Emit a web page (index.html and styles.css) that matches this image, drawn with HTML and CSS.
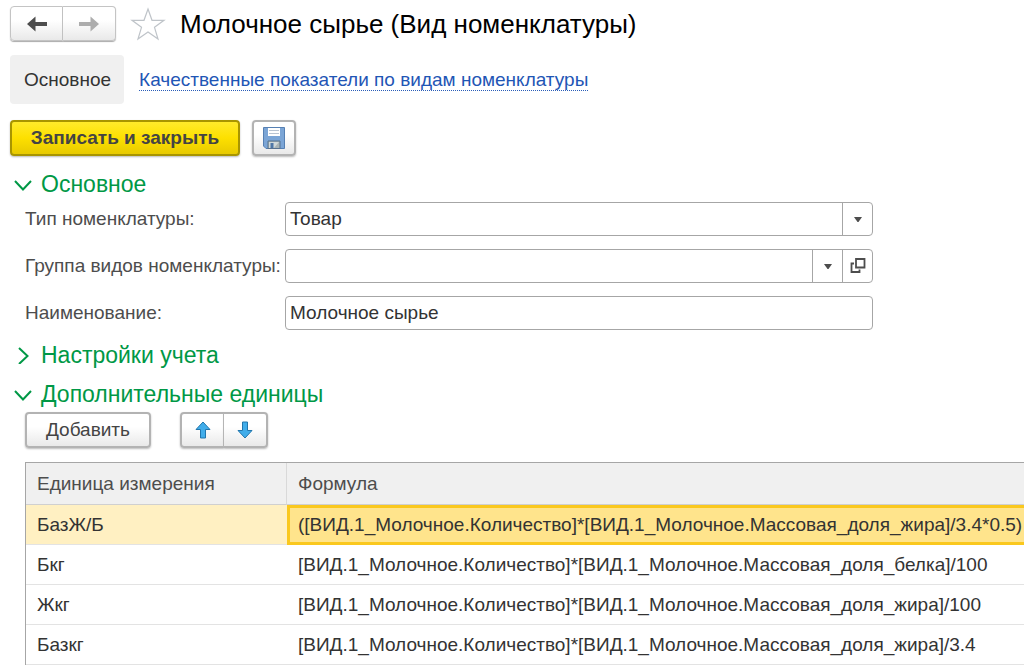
FILE: index.html
```html
<!DOCTYPE html>
<html lang="ru">
<head>
<meta charset="utf-8">
<meta name="viewport" content="width=device-width, initial-scale=1">
<title>Молочное сырье (Вид номенклатуры)</title>
<link rel="stylesheet" href="styles.css">
</head>
<body>
<header class="header">
  <div class="button-group">
    <button class="btn nav-btn" type="button" aria-label="Назад">
      <svg width="22" height="16" viewBox="0 0 22 16"><path d="M1 8 L9.500 0.500 V6 H21 V10 H9.500 V15.500 Z" fill="#4d4d4d"/></svg>
    </button>
    <button class="btn nav-btn" type="button" aria-label="Вперед">
      <svg width="22" height="16" viewBox="0 0 22 16"><path d="M21 8 L12.500 0.500 V6 H1 V10 H12.500 V15.500 Z" fill="#adadad"/></svg>
    </button>
  </div>
  <button class="star" type="button" aria-label="Добавить в избранное">
    <svg width="36" height="34" viewBox="0 0 36 34"><path d="M18 2 L22 13.300 H34 L24.500 20.300 L28 32 L18 25 L8 32 L11.500 20.300 L2 13.300 H14 Z" fill="#fff" stroke="#bfc4c9" stroke-width="1.200"/></svg>
  </button>
  <h1 class="title">Молочное сырье (Вид номенклатуры)</h1>
</header>

<nav class="tabs">
  <span class="tab-current" aria-current="page">Основное</span>
  <a class="tab-link" href="#quality">Качественные показатели по видам номенклатуры</a>
</nav>

<main class="content">
  <div class="commands">
    <button class="btn btn-primary" type="button">Записать и закрыть</button>
    <button class="btn btn-save" type="button" aria-label="Записать">
      <svg width="22" height="22" viewBox="0 0 22 22">
        <path d="M0.500 0.500 H21.500 V21.500 H3 L0.500 19 Z" fill="#7ba5d6" stroke="#5680b3"/>
        <path d="M5 1 H17 V9 H5 Z" fill="#fff"/>
        <path d="M6 3.500 H16 M6 6.500 H16" stroke="#b9c4d2"/>
        <path d="M5 14 H17 V21.500 H5 Z" fill="#a9b4b5" stroke="#57728f"/>
        <path d="M6 15 H16 L11 21 H6 Z" fill="#d0d8d8"/>
        <path d="M7.500 16 H10.500 V21 H7.500 Z" fill="#4e77a6"/>
      </svg>
    </button>
  </div>

  <section>
    <h2 class="section-title">
      <button class="section-toggle" type="button" aria-expanded="true">
        <svg class="chevron" width="18" height="18" viewBox="0 0 18 18"><path d="M1 6 L9 14.500 L17 6"/></svg>
        Основное
      </button>
    </h2>
    <div class="form">
      <label class="label" for="type">Тип номенклатуры:</label>
      <div class="field">
        <div class="picker">
          <select class="control" id="type"><option>Товар</option></select>
          <span class="arrow"><svg width="8" height="5" viewBox="0 0 8 5"><path d="M0 0 H8 L4.500 5 H3.500 Z" fill="#4d4d4d"/></svg></span>
        </div>
      </div>
      <label class="label" for="group">Группа видов номенклатуры:</label>
      <div class="field">
        <div class="picker">
          <select class="control" id="group"><option></option></select>
          <span class="arrow"><svg width="8" height="5" viewBox="0 0 8 5"><path d="M0 0 H8 L4.500 5 H3.500 Z" fill="#4d4d4d"/></svg></span>
        </div>
        <button class="open-btn" type="button" aria-label="Открыть">
          <svg width="16" height="16" viewBox="0 0 16 16" fill="none" stroke="#4d4d4d" stroke-width="1.800"><path d="M6 1 H14.500 V9.500 H6 Z M4 5.500 H1.500 V14 H9.500 V11.500"/></svg>
        </button>
      </div>
      <label class="label" for="name">Наименование:</label>
      <div class="field"><input class="control" id="name" type="text" value="Молочное сырье"></div>
    </div>
  </section>

  <section>
    <h2 class="section-title section-collapsed">
      <button class="section-toggle" type="button" aria-expanded="false">
        <svg class="chevron" width="18" height="18" viewBox="0 0 18 18"><path d="M5 2 L13.500 10 L5 18"/></svg>
        Настройки учета
      </button>
    </h2>
  </section>

  <section>
    <h2 class="section-title">
      <button class="section-toggle" type="button" aria-expanded="true">
        <svg class="chevron" width="18" height="18" viewBox="0 0 18 18"><path d="M1 6 L9 14.500 L17 6"/></svg>
        Дополнительные единицы
      </button>
    </h2>
    <div class="toolbar">
      <button class="btn btn-add" type="button">Добавить</button>
      <div class="button-group">
        <button class="btn move-btn" type="button" aria-label="Переместить вверх">
          <svg width="16" height="18" viewBox="0 0 16 18"><path d="M8 1 L15 8.500 H10.500 V17 H5.500 V8.500 H1 Z" fill="#41adea" stroke="#2176ad" stroke-linejoin="round"/></svg>
        </button>
        <button class="btn move-btn" type="button" aria-label="Переместить вниз">
          <svg width="16" height="18" viewBox="0 0 16 18"><path d="M8 17 L15 9.500 H10.500 V1 H5.500 V9.500 H1 Z" fill="#41adea" stroke="#2176ad" stroke-linejoin="round"/></svg>
        </button>
      </div>
    </div>
    <table class="units">
      <thead>
        <tr><th class="unit-col" scope="col">Единица измерения</th><th scope="col">Формула</th></tr>
      </thead>
      <tbody>
        <tr class="selected"><td>БазЖ/Б</td><td class="active-cell">([ВИД.1_Молочное.Количество]*[ВИД.1_Молочное.Массовая_доля_жира]/3.4*0.5)</td></tr>
        <tr><td>Бкг</td><td>[ВИД.1_Молочное.Количество]*[ВИД.1_Молочное.Массовая_доля_белка]/100</td></tr>
        <tr><td>Жкг</td><td>[ВИД.1_Молочное.Количество]*[ВИД.1_Молочное.Массовая_доля_жира]/100</td></tr>
        <tr><td>Базкг</td><td>[ВИД.1_Молочное.Количество]*[ВИД.1_Молочное.Массовая_доля_жира]/3.4</td></tr>
      </tbody>
    </table>
  </section>
</main>
</body>
</html>
```
FILE: styles.css
```css
* { box-sizing: border-box; }

body {
  margin: 0;
  padding: 6px 0 0 10px;
  background: #fff;
  color: #333;
  font-family: "Liberation Sans", Arial, sans-serif;
  font-size: 19px;
  line-height: 24px;
  overflow-x: hidden;
}

button, input, select { font: inherit; color: inherit; }
svg { display: block; flex: none; }

.header { display: flex; align-items: center; }

.title {
  margin: 0;
  color: #000;
  font-size: 26px;
  font-weight: 400;
  line-height: 32px;
}

.btn {
  display: flex;
  align-items: center;
  justify-content: center;
  height: 36px;
  padding: 0;
  border: 2px solid #b3b3b3;
  border-radius: 4px;
  background: linear-gradient(#fff 40%, #e9e9e9);
  box-shadow: 0 1px 2px #bbb;
  color: #444;
}

.button-group { display: flex; }
.button-group .btn:first-child { border-right-width: 1px; border-radius: 4px 0 0 4px; }
.button-group .btn:last-child { border-left-width: 0; border-radius: 0 4px 4px 0; }
.button-group .nav-btn {
  width: 53px;
  height: 35px;
  border-width: 1px;
  border-color: #c4c4c4;
  box-shadow: 0 1px 1px #aaa;
}
.button-group .nav-btn:last-child { border-left-width: 0; }

.star {
  margin: 0 14px;
  padding: 0;
  border: 0;
  background: none;
}

.tabs { display: flex; align-items: center; gap: 15px; margin-top: 14px; }
.tab-current {
  padding: 13px 13px 12px 14px;
  border-radius: 4px;
  background: #f0f0f0;
}
.tab-link {
  border-bottom: 1px dotted #2a5db8;
  color: #1f56b5;
  line-height: 20px;
  margin-top: 2px;
  text-decoration: none;
}

.commands { display: flex; gap: 12px; margin: 16px 0 12px; }
.btn-primary {
  width: 230px;
  border-color: #a89500;
  background: linear-gradient(#ffea2b, #fde000 50%, #e8ca00);
  font-weight: 700;
}
.btn-save { width: 44px; }

.section-title { margin: 0; font-size: 23px; font-weight: 400; line-height: 32px; }
.section-toggle {
  display: flex;
  align-items: center;
  gap: 9px;
  padding: 0 0 0 4px;
  border: 0;
  background: none;
  color: #009846;
}
.chevron { fill: none; stroke: #009846; stroke-width: 2; }
.section-collapsed { margin: 9px 0 7px; }

.form {
  display: grid;
  grid-template-columns: 260px minmax(0, 588px);
  row-gap: 13px;
  align-items: center;
  margin: 2px 0 0 15px;
  padding-right: 15px;
}
.label { color: #4d4d4d; white-space: nowrap; }

.field {
  display: flex;
  height: 34px;
  border: 1px solid #a6a6a6;
  border-radius: 4px;
  overflow: hidden;
}
.control {
  width: 100%;
  height: 32px;
  padding: 0 5px 0 4px;
  border: 0;
  background: none;
  appearance: none;
}
.picker { display: grid; flex: 1; grid-template-columns: minmax(0, 1fr) 30px; }
.picker .control { grid-area: 1 / 1 / 2 / 3; }
.arrow {
  grid-area: 1 / 2;
  display: grid;
  place-items: center;
  border-left: 1px solid #a6a6a6;
  pointer-events: none;
}
.open-btn {
  display: grid;
  place-items: center;
  width: 30px;
  padding: 0;
  border: 0;
  border-left: 1px solid #a6a6a6;
  background: none;
}

.toolbar { display: flex; gap: 29px; margin: 2px 0 14px 15px; }
.btn-add { width: 126px; }
.move-btn { width: 44px; }

.units {
  width: calc(100% - 15px);
  margin-left: 15px;
  border-collapse: separate;
  border-spacing: 0;
  border-top: 1px solid #a6a6a6;
  border-left: 1px solid #a6a6a6;
  table-layout: fixed;
  white-space: nowrap;
}
.units th {
  height: 42px;
  padding: 0 11px;
  border-bottom: 1px solid #d0d0d0;
  background: #f0f0f0;
  color: #4d4d4d;
  font-weight: 400;
  text-align: left;
}
.units .unit-col { width: 261px; border-right: 1px solid #d9d9d9; }
.units td { height: 40px; padding: 0 0 0 11px; border-bottom: 1px solid #e3e3e3; }
.units .active-cell {
  padding-left: 8px;
  border: 3px solid #fac81e;
  border-right: 0;
  background: #ffe48c;
}
.selected td { background: #fff0c2; }
.units .selected .active-cell { background: #ffe48c; }
```
